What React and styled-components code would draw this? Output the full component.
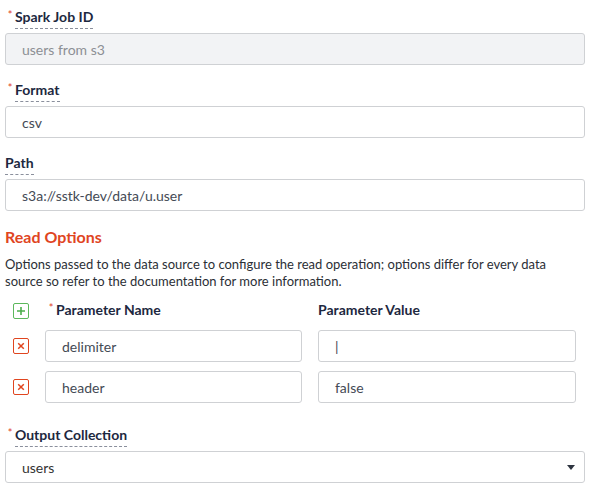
import styled, { createGlobalStyle } from "styled-components";

const GlobalStyle = createGlobalStyle`
  html, body {
    margin: 0;
    padding: 0;
    background: #fff;
  }
  body {
    font-family: Lato, "Open Sans", "Liberation Sans", sans-serif;
    color: #1d2840;
  }
`;

const Form = styled.div`
  width: 580px;
  padding: 7px 5px 0 5px;
`;

const Field = styled.div`
  margin-bottom: 15px;
`;

const LabelRow = styled.div`
  display: flex;
  align-items: flex-start;
  margin-bottom: 4px;
`;

const Star = styled.span`
  color: #e0451f;
  font-size: 11px;
  line-height: 14px;
  width: 10px;
  text-align: center;
  margin-top: 1px;
`;

const Label = styled.span`
  font-size: 14px;
  font-weight: 700;
  line-height: 20px;
  color: #1d2840;
  padding-bottom: 1px;
  border-bottom: 1px dashed ${props => (props.plain ? "transparent" : "#8a8f9c")};
`;

const Input = styled.div`
  box-sizing: border-box;
  height: 32px;
  width: 100%;
  display: flex;
  align-items: center;
  padding: 0 16px;
  border: 1px solid #cfd1d4;
  border-radius: 3px;
  font-size: 14px;
  color: ${props => (props.disabled ? "#8c8f94" : "#444a55")};
  background: ${props => (props.disabled ? "#f2f3f5" : "#fff")};
`;

const Select = styled(Input)`
  justify-content: space-between;
  padding-right: 9px;
  color: #333;
`;

const Caret = styled.span`
  width: 0;
  height: 0;
  border-left: 4.5px solid transparent;
  border-right: 4.5px solid transparent;
  border-top: 5px solid #2e3440;
`;

const Heading = styled.h3`
  margin: 5px 0 8px 0;
  font-size: 16px;
  line-height: 22px;
  font-weight: 700;
  color: #e0451f;
`;

const Description = styled.p`
  margin: 0 0 10px 0;
  font-size: 13px;
  line-height: 17px;
  color: #2b2f36;
`;

const ParamTable = styled.div`
  display: grid;
  grid-template-columns: 16px 257px 258px;
  column-gap: 16px;
  row-gap: 9px;
  padding-left: 8px;
  align-items: center;
  margin-bottom: 22px;
`;

const HeaderCell = styled.div`
  display: flex;
  align-items: flex-start;
  margin-bottom: -1px;
  margin-left: ${props => (props.starred ? "1px" : "0")};
`;

const IconBox = styled.span`
  box-sizing: border-box;
  width: 16px;
  height: 16px;
  border: 1px solid ${props => props.color};
  border-radius: 2px;
  display: flex;
  align-items: center;
  justify-content: center;
`;

function PlusIcon() {
  return (
    <IconBox color="#5cb85c">
      <svg width="10" height="10" viewBox="0 0 10 10">
        <path d="M5 1v8M1 5h8" stroke="#4cae4c" strokeWidth="1.6" />
      </svg>
    </IconBox>
  );
}

function RemoveIcon() {
  return (
    <IconBox color="#e0451f">
      <svg width="8" height="8" viewBox="0 0 8 8">
        <path d="M1.2 1.2l5.6 5.6M6.8 1.2L1.2 6.8" stroke="#e0451f" strokeWidth="1.5" />
      </svg>
    </IconBox>
  );
}

function FieldLabel({ children, required }) {
  return (
    <LabelRow>
      {required ? <Star>*</Star> : null}
      <Label>{children}</Label>
    </LabelRow>
  );
}

const params = [
  { name: "delimiter", value: "|" },
  { name: "header", value: "false" },
];

export default function App() {
  return (
    <>
      <GlobalStyle />
      <Form>
        <Field>
          <FieldLabel required>Spark Job ID</FieldLabel>
          <Input disabled>users from s3</Input>
        </Field>
        <Field>
          <FieldLabel required>Format</FieldLabel>
          <Input>csv</Input>
        </Field>
        <Field>
          <FieldLabel>Path</FieldLabel>
          <Input>s3a://sstk-dev/data/u.user</Input>
        </Field>

        <Heading>Read Options</Heading>
        <Description>
          Options passed to the data source to configure the read operation; options differ for every data
          source so refer to the documentation for more information.
        </Description>

        <ParamTable>
          <PlusIcon />
          <HeaderCell starred>
            <Star>*</Star>
            <Label plain>Parameter Name</Label>
          </HeaderCell>
          <HeaderCell>
            <Label plain>Parameter Value</Label>
          </HeaderCell>
          {params.map(p => [
            <RemoveIcon key={p.name + "-x"} />,
            <Input key={p.name + "-n"}>{p.name}</Input>,
            <Input key={p.name + "-v"}>{p.value}</Input>,
          ])}
        </ParamTable>

        <Field>
          <FieldLabel required>Output Collection</FieldLabel>
          <Select>
            users
            <Caret />
          </Select>
        </Field>
      </Form>
    </>
  );
}
